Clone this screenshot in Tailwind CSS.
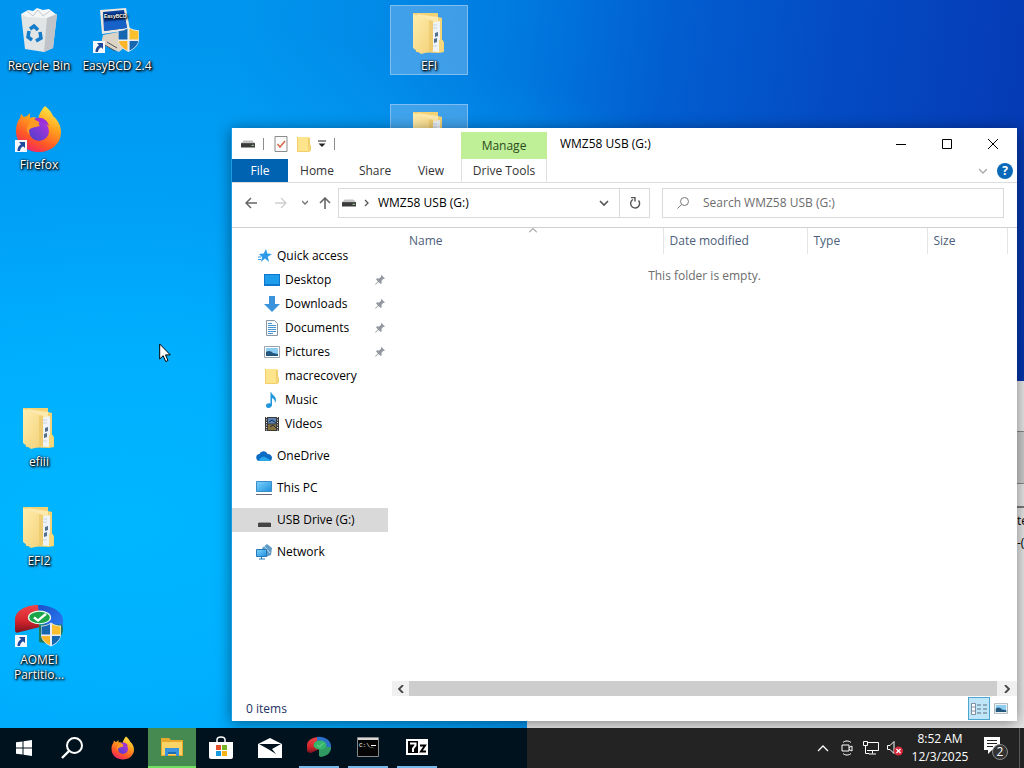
<!DOCTYPE html>
<html lang="en">
<head>
  <meta charset="UTF-8" />
  <meta name="viewport" content="width=device-width, initial-scale=1.0" />
  <title>WMZ58 USB (G:)</title>
  <script src="https://cdn.jsdelivr.net/npm/@tailwindcss/browser@4"></script>
</head>
<body class="h-screen overflow-hidden flex flex-col font-['Open_Sans','Noto_Sans',sans-serif] text-xs text-black">

  <!-- shared icons -->
  <svg class="absolute size-0" aria-hidden="true">
    <defs>
      <linearGradient id="gFolder" x1="0" y1="0" x2="1" y2="1"><stop offset="0" stop-color="#ffeeae"/><stop offset="1" stop-color="#f3d077"/></linearGradient>
      <linearGradient id="gFox" x1="0.8" y1="0" x2="0.3" y2="1"><stop offset="0" stop-color="#fff04a"/><stop offset="0.4" stop-color="#ffa01e"/><stop offset="0.75" stop-color="#ff5428"/><stop offset="1" stop-color="#f0246a"/></linearGradient>
      <linearGradient id="gGlobe" x1="1" y1="0" x2="0" y2="1"><stop offset="0" stop-color="#b833e0"/><stop offset="1" stop-color="#4a3fc8"/></linearGradient>
      <linearGradient id="gRed" x1="0" y1="0" x2="0" y2="1"><stop offset="0" stop-color="#f0464a"/><stop offset="0.6" stop-color="#d2242c"/><stop offset="1" stop-color="#7c1220"/></linearGradient>
      <linearGradient id="gBlue" x1="0" y1="0" x2="1" y2="1"><stop offset="0" stop-color="#1c50c8"/><stop offset="1" stop-color="#2a7cf4"/></linearGradient>
      <linearGradient id="gScreen" x1="0" y1="0" x2="1" y2="1"><stop offset="0" stop-color="#7fd4fb"/><stop offset="1" stop-color="#1e90e0"/></linearGradient>
    </defs>

    <symbol id="shortcut" viewBox="0 0 12 12">
      <rect width="12" height="12" fill="#f6f8fc"/>
      <path d="M4 2h6v6L8 6.200C6 7.500 5 9 5 11H2.500C2.300 8 3.700 5.500 6 4.200Z" fill="#1f4a9c"/>
    </symbol>

    <symbol id="shield" viewBox="0 0 22 24">
      <path d="M11 0C8 2.500 4 3 1 3v9c0 6 5 9.500 10 12 5-2.500 10-6 10-12V3c-3 0-7-.5-10-3Z" fill="#e8eef4"/>
      <path d="M10 1.500C7.500 3.200 5 3.800 1.500 4V12H10Z" fill="#1766b0"/>
      <path d="M12 1.500c2.500 1.700 5 2.300 8.500 2.500V12H12Z" fill="#fcc02e"/>
      <path d="M1.700 13.500H10v9.200c-4-2.200-7.800-5.200-8.300-9.200Z" fill="#fcb52a"/>
      <path d="M20.300 13.500H12v9.200c4-2.200 7.800-5.200 8.300-9.200Z" fill="#1766b0"/>
    </symbol>

    <symbol id="folderBig" viewBox="0 -2 48 48">
      <path d="M8 5h25v4l4 1v22l2 2v10l-5 1-23-1Z" fill="#f3d274"/>
      <path d="M12 6 33 9v35l-20-1Z" fill="#fbe9ae"/>
      <path d="m27 15 8-2v31l-8-1Z" fill="#eef3f8"/>
      <path d="M28 17h4M28 20h4M28 38h4" stroke="#c9d3dd"/>
      <path d="m30 25 3-1v4l-3 1Zm-1 6 3-1v4l-3 1Z" fill="#54708c"/>
      <path d="m8 6 20 7v30l-12 3-8-6Z" fill="url(#gFolder)"/>
      <path d="m24 12 4 1v30l-4 1Z" fill="#ecc868" opacity=".7"/>
      <path d="M34 32h4v11l-4 1Z" fill="#f7d97d"/>
    </symbol>

    <symbol id="firefox" viewBox="0 0 48 48">
      <path d="M30 1c4 3 7 7 8 10 5 4 8 10 8 16 0 12-10 20-22 20S1 39 1 26c0-5 1-9 4-13l1-4 3 3 3-1 3-3v5c2-1 6-1 8 1 1-5 4-10 7-13Z" fill="url(#gFox)"/>
      <circle cx="24" cy="26" r="10" fill="url(#gGlobe)"/>
      <path d="M14 19c4-5 8-6 11-4-1 3-2 4 0 6-4 1-8 1-11 4 0 2 0 3 1 5-4-3-4-7-1-11Z" fill="#ff9a24"/>
      <path d="M19 14c7-3 13 0 15 7-5-4-10-3-15-7Z" fill="#9a2ed8"/>
    </symbol>

    <symbol id="partition" viewBox="0 0 48 48" preserveAspectRatio="none">
      <path d="M23 1C10 1 0 8 0 17v12c0 2 1 3 2 3l22-6 2-10Z" fill="url(#gRed)"/>
      <path d="M23 1c14 0 25 8 25 17v10H30l-6-12Z" fill="url(#gBlue)"/>
      <path d="M24 23h23l1 5c0 9-7 15-15 17l-9-3Z" fill="#1d7a5a"/>
      <ellipse cx="24.500" cy="15" rx="11" ry="7" fill="#19a548" stroke="#e9fff0" stroke-width="1.300"/>
      <path d="m19 15 4 3.500 8-7.500" fill="none" stroke="#fff" stroke-width="2.500"/>
    </symbol>

    <symbol id="partitionSmall" viewBox="0 0 24 24">
      <path d="M12 2C5 2 0 6 0 10v5c0 2 2 3 4 3l8-4Z" fill="url(#gRed)"/>
      <path d="M10 2c8-1 14 4 14 9v4l-10-1-4-6Z" fill="#2a6fc8"/>
      <path d="M12 12h12c0 6-4 9-10 10l-2-1Z" fill="#2f9a62"/>
      <ellipse cx="13" cy="10" rx="6.500" ry="4.500" fill="#35b56c"/>
      <path d="m10 10 2.500 2 4-4" fill="none" stroke="#7fd496"/>
    </symbol>

    <symbol id="folder" viewBox="0 0 16 16">
      <path d="M1 1h11l2 1v13l-2 1H1Z" fill="#f2cf6b"/>
      <path d="M2 1h10v14H2Z" fill="#ffe48e"/>
      <path d="M12 9h3v6l-3 1Z" fill="#f4d375"/>
    </symbol>

    <symbol id="drive" viewBox="0 0 16 8">
      <path d="M3 0h10l3 3H0Z" fill="#c4c4c4"/>
      <path d="M0 3h16v5H0Z" fill="#3b3b3b"/>
      <path d="M12 5.500h3" stroke="#b8e0b8"/>
    </symbol>

    <symbol id="pin" viewBox="0 0 12 12">
      <path d="m7.500 1 3.500 3.500-1.200.5-.6-.2L7.500 7l.2 2.300-1 .7L4.600 8 1.600 10.800l-.6-.5L4 7.400 2 5.200l1-1 2.300.2L7.200 2.500 7 1.700Z" fill="#9298a0"/>
    </symbol>

    <symbol id="picture" viewBox="0 0 16 12">
      <path d="M.5.5h15v11H.5Z" fill="#fff" stroke="#9aa4ae"/>
      <path d="M2 2h12v8H2Z" fill="#8ecdf2"/>
      <path d="M2 6c3-2 5-1 7 1l5 1v2H2Z" fill="#24577e"/>
    </symbol>
  </svg>

  <main class="relative flex-1 min-h-0 overflow-hidden bg-[radial-gradient(ellipse_at_12%_72%,#00b6ff_0%,#00b0ff_22%,#00a6fbb0_42%,#009cf400_68%),linear-gradient(97deg,#0095ee_0%,#0095ee_22%,#0288e6_36%,#0078de_48%,#025fd0_60%,#044cc4_75%,#053cb6_92%,#0330a5_100%)]">

    <!-- desktop icons -->
    <div class="absolute inset-0 pt-[5px] grid grid-cols-[repeat(13,78px)] auto-rows-[99px] items-start text-white text-center leading-[15px] [text-shadow:1px_1px_2px_#000,1px_1px_3px_#000,0_0_2px_#000]">
      <div class="col-start-1 row-start-1 flex flex-col items-center gap-[5px]">
        <svg class="size-12" viewBox="0 0 48 48">
          <path d="m6 9 7-4 5 1 4-3 6 2 6-1 8 6-5 5H12Z" fill="#f4f6f7"/>
          <path d="m6 9 6 3 20 1 10-4-4 34-9 4-19-3Z" fill="#e2e5e6"/>
          <path d="M32 13 42 9l-4 34-9 4Z" fill="#c0c4c8"/>
          <path d="m12 6 6 5 5-6 5 6 7-5" fill="none" stroke="#c5cbd0"/>
          <path d="m15 24 4-3 4 4M25 27l1 6-5 3M17 35l-4-3 1-6" fill="none" stroke="#147cc8" stroke-width="3.500"/>
        </svg>
        <span>Recycle Bin</span>
      </div>
      <div class="col-start-2 row-start-1 flex flex-col items-center gap-[5px]">
        <svg class="size-12" viewBox="0 0 48 48">
          <path d="M7 5 33 3l4 22-28 4Z" fill="#ece8e0"/>
          <path d="m10 7 21-2 3 18-23 3Z" fill="#0b3f9c"/>
          <path d="m11 17 21-3 2 9-23 3Z" fill="#1662c8"/>
          <text x="11" y="13" font-size="5" fill="#fff" font-family="Liberation Sans, sans-serif" font-weight="bold">EasyBCD</text>
          <path d="m10 30 20-4 9 10-13 11-18-8Z" fill="#ddd4c8"/>
          <path d="m12 40 10 6M14 37l10 6" stroke="#555"/>
          <use href="#shield" x="24" y="22" width="23" height="25"/>
          <use href="#shortcut" x="0" y="36" width="12" height="12"/>
        </svg>
        <span>EasyBCD 2.4</span>
      </div>
      <div class="col-start-1 row-start-2 flex flex-col items-center gap-[5px]">
        <svg class="size-12" viewBox="0 0 48 48">
          <use href="#firefox" y="1" width="48" height="48"/>
          <use href="#shortcut" x="0" y="36" width="12" height="12"/>
        </svg>
        <span>Firefox</span>
      </div>
      <div class="col-start-1 row-start-5 flex flex-col items-center gap-[5px]">
        <svg class="size-12"><use href="#folderBig"/></svg>
        <span>efiii</span>
      </div>
      <div class="col-start-1 row-start-6 flex flex-col items-center gap-[5px]">
        <svg class="size-12"><use href="#folderBig"/></svg>
        <span>EFI2</span>
      </div>
      <div class="col-start-1 row-start-7 flex flex-col items-center gap-[5px]">
        <svg class="size-12" viewBox="0 0 48 48">
          <use href="#partition" y="5" width="48" height="43"/>
          <use href="#shield" x="25" y="23" width="22" height="25"/>
          <use href="#shortcut" x="0" y="36" width="12" height="12"/>
        </svg>
        <span>AOMEI<br>Partitio...</span>
      </div>
      <div class="col-start-6 row-start-1 h-[70px] flex flex-col items-center gap-1 border border-[#7fbdf2] bg-[#7db9ee]/50">
        <svg class="size-12"><use href="#folderBig"/></svg>
        <span>EFI</span>
      </div>
      <div class="col-start-6 row-start-2 h-[70px] flex flex-col items-center border border-[#7fbdf2] bg-[#7db9ee]/50">
        <svg class="size-12"><use href="#folderBig"/></svg>
      </div>
    </div>

    <!-- window in the back -->
    <section class="absolute left-[527px] right-0 top-[381px] bottom-0 flex flex-col items-stretch bg-[#e8e8e8] overflow-hidden">
      <div class="h-[51px] border-b border-[#8a8a8a]"></div>
      <div class="h-[52px] bg-[#cdcdcd] border-b border-[#8a8a8a]"></div>
      <div class="h-6 border-b-2 border-[#7a7a7a]"></div>
      <p class="pt-0.5 pl-[490px] leading-[22px] whitespace-nowrap">te<br>-(</p>
    </section>

    <!-- explorer -->
    <section class="absolute left-[231px] right-[7px] top-32 bottom-[7px] flex flex-col bg-white border-l border-[#1a9be8] shadow-[0_2px_14px_rgba(0,0,0,0.45)]">
      <header class="flex h-[31px] pr-px">
        <div class="w-[229px] flex items-center pl-[9px]">
          <svg class="w-[14px] h-2"><use href="#drive"/></svg>
          <span class="ml-2 w-px h-3 bg-[#8c8c8c]"></span>
          <button class="ml-2.5" aria-label="Properties">
            <svg class="w-[14px] h-4" viewBox="0 0 14 16"><path d="M1 .5h12v15H1Z" fill="#fbfbfb" stroke="#8c8c8c"/><path d="m3.500 8 2.500 3 5-6" fill="none" stroke="#d8694a" stroke-width="1.500"/></svg>
          </button>
          <button class="ml-2" aria-label="New folder"><svg class="size-4"><use href="#folder"/></svg></button>
          <button class="ml-1.5" aria-label="Customize Quick Access Toolbar">
            <svg class="w-2 h-2" viewBox="0 0 8 8"><path d="M0 1h8" stroke="#222"/><path d="M.5 3.500h7L4 7Z" fill="#222"/></svg>
          </button>
          <span class="ml-2 w-px h-3 bg-[#8c8c8c]"></span>
        </div>
        <div class="w-[86px] mt-1 flex items-center justify-center bg-[#bff098] text-[#2c4a1c]">Manage</div>
        <h1 class="flex-1 pl-[13px] leading-[31px]">WMZ58 USB (G:)</h1>
        <button class="w-[46px] grid place-items-center" aria-label="Minimize"><svg class="size-[10px]" viewBox="0 0 10 10"><path d="M0 5.500h10" stroke="#000"/></svg></button>
        <button class="w-[46px] grid place-items-center" aria-label="Maximize"><svg class="size-[10px]" viewBox="0 0 10 10"><path d="M.5.5h9v9h-9Z" fill="none" stroke="#000"/></svg></button>
        <button class="w-[46px] grid place-items-center" aria-label="Close"><svg class="size-[10px]" viewBox="0 0 10 10"><path d="m0 0 10 10M10 0 0 10" stroke="#000"/></svg></button>
      </header>

      <nav class="flex h-6 border-b border-[#dcdcdc] text-[#333]">
        <button class="w-14 bg-[#0063b1] text-white">File</button>
        <button class="w-[58px]">Home</button>
        <button class="w-[58px]">Share</button>
        <button class="w-[54px]">View</button>
        <button class="ml-[3px] w-[86px] border-x border-[#e0e0e0]">Drive Tools</button>
        <div class="flex-1"></div>
        <button class="mr-2.5" aria-label="Expand the Ribbon"><svg class="w-2 h-2" viewBox="0 0 8 8"><path d="m0 2 4 4 4-4" fill="none" stroke="#a8a8a8" stroke-width="1.300"/></svg></button>
        <button class="mr-1" aria-label="Help">
          <span class="grid place-items-center size-4 rounded-full bg-[#0a68b8] text-white font-bold">?</span>
        </button>
      </nav>

      <div class="flex items-center h-[45px] pb-1 pr-[13px] border-b border-[#d0d0d0]">
        <div class="w-[106px] flex items-center pl-[13px]">
          <button aria-label="Back"><svg class="w-3 h-3" viewBox="0 0 12 12"><path d="M6 1 1 6l5 5M1 6h11" fill="none" stroke="#666" stroke-width="1.500"/></svg></button>
          <button class="ml-[18px]" aria-label="Forward"><svg class="w-3 h-3" viewBox="0 0 12 12"><path d="m6 1 5 5-5 5M11 6H0" fill="none" stroke="#cfcfcf" stroke-width="1.300"/></svg></button>
          <button class="ml-[15px]" aria-label="Recent locations"><svg class="w-[6px] h-[6px]" viewBox="0 0 6 6"><path d="m0 1 3 3 3-3" fill="none" stroke="#777" stroke-width="1.400"/></svg></button>
          <button class="ml-[11px]" aria-label="Up"><svg class="w-3 h-3" viewBox="0 0 12 12"><path d="m1 6 5-5 5 5M6 1v11" fill="none" stroke="#666" stroke-width="1.600"/></svg></button>
        </div>
        <div class="w-[312px] h-[30px] flex items-center border border-[#d9d9d9]">
          <svg class="ml-[3px] w-[14px] h-2"><use href="#drive"/></svg>
          <svg class="ml-2 w-[5px] h-2" viewBox="0 0 5 8"><path d="m1 1 3 3-3 3" fill="none" stroke="#555" stroke-width="1.300"/></svg>
          <span class="ml-[9px] flex-1">WMZ58 USB (G:)</span>
          <button class="mr-2.5" aria-label="Previous locations"><svg class="w-[10px] h-2" viewBox="0 0 10 8"><path d="m1 2 4 4 4-4" fill="none" stroke="#555" stroke-width="1.600"/></svg></button>
          <button class="w-[30px] h-full border-l border-[#d9d9d9] grid place-items-center" aria-label="Refresh">
            <svg class="size-3" viewBox="0 0 12 12"><path d="M9.500 3.500A4.500 4.500 0 1 1 4 2.500" fill="none" stroke="#555" stroke-width="1.400"/><path d="M2 .5h4v4" fill="none" stroke="#555" stroke-width="1.400"/></svg>
          </button>
        </div>
        <label class="ml-3 flex-1 h-[30px] flex items-center border border-[#d9d9d9] pl-3.5">
          <svg class="size-3" viewBox="0 0 12 12"><circle cx="7.500" cy="4.500" r="4" fill="none" stroke="#777"/><path d="M4.500 7.500.5 11.500" stroke="#777"/></svg>
          <input type="search" aria-label="Search" placeholder="Search WMZ58 USB (G:)" class="ml-3.5 flex-1 min-w-0 outline-none placeholder:text-[#6d6d6d]" />
        </label>
      </div>

      <div class="flex flex-1 min-h-0">
        <aside class="w-[156px] shrink-0 pt-4 leading-6 whitespace-nowrap">
          <a href="#" class="flex items-center h-6 pl-[26px] text-black">
            <svg class="w-[14px] h-[14px] mr-[5px]" viewBox="0 0 14 14"><path d="m8 0 1.300 4.600L14 5 9.800 7.800 11 13 7 9.600 2.800 13l1.400-4.800L1 5l4.700-.5Z" fill="#2f9be8"/><path d="M0 8h3M0 10.500h3" stroke="#2f9be8"/></svg>
            Quick access</a>
          <a href="#" class="flex items-center h-6 pl-8 pr-0.5">
            <svg class="size-4 mr-[5px]" viewBox="0 0 16 16"><path d="M0 2h16v12H0Z" fill="#1078cc"/><path d="M1 3h14v9H1Z" fill="#1f9cec"/></svg>
            <span class="flex-1">Desktop</span><svg class="size-3"><use href="#pin"/></svg></a>
          <a href="#" class="flex items-center h-6 pl-8 pr-0.5">
            <svg class="size-4 mr-[5px]" viewBox="0 0 16 16"><path d="M5 0h6v8h5l-8 8-8-8h5Z" fill="#3b93dc"/></svg>
            <span class="flex-1">Downloads</span><svg class="size-3"><use href="#pin"/></svg></a>
          <a href="#" class="flex items-center h-6 pl-8 pr-0.5">
            <svg class="size-4 mr-[5px]" viewBox="0 0 16 16"><path d="M2.500.5h8l3 3v12h-11Z" fill="#f8fbfd" stroke="#8a97a3"/><path d="M4 5.500h8M4 7.500h8M4 9.500h8M4 11.500h8M4 13.500h5M4 3.500h4" stroke="#4a94cf"/></svg>
            <span class="flex-1">Documents</span><svg class="size-3"><use href="#pin"/></svg></a>
          <a href="#" class="flex items-center h-6 pl-8 pr-0.5">
            <svg class="w-4 h-3 mr-[5px]"><use href="#picture"/></svg>
            <span class="flex-1">Pictures</span><svg class="size-3"><use href="#pin"/></svg></a>
          <a href="#" class="flex items-center h-6 pl-8">
            <svg class="size-4 mr-[5px]"><use href="#folder"/></svg>
            macrecovery</a>
          <a href="#" class="flex items-center h-6 pl-8">
            <svg class="size-4 mr-[5px]" viewBox="0 0 16 16"><path d="M7 0c1 3 5 4 5 8 0 1-.5 2-1 3 0-3-1-4-3-5v7c0 1.500-1.500 3-3.500 3S2 15 2 13.500 4 11 6.500 11.500V0Z" fill="#1e96dc"/></svg>
            Music</a>
          <a href="#" class="flex items-center h-6 pl-8">
            <svg class="size-4 mr-[5px]" viewBox="0 0 16 16"><path d="M1 1h14v14H1Z" fill="#3a3a3a"/><path d="M4 2h8v5.500H4Z" fill="#5a83b8"/><path d="M4 8.500h8V14H4Z" fill="#88733c"/><path d="M2.500 1v14M13.500 1v14" stroke="#eee" stroke-dasharray="1 1.500"/><path d="m5 6 3-2 4 3M6 11l3-2 3 3" stroke="#1f2e4a" fill="none"/></svg>
            Videos</a>
          <a href="#" class="flex items-center h-6 mt-2 pl-6">
            <svg class="w-4 h-[10px] mr-[5px]" viewBox="0 0 16 10"><path d="M4 10a3.500 3.500 0 0 1-.5-7C5-.5 10-1 11.500 3 14.500 3 16 5 16 7s-1.500 3-3 3Z" fill="#0a6cc4"/><path d="M3 10c0-3 4-5 6-4l6 3.500-2 .5Z" fill="#28a8ea"/></svg>
            OneDrive</a>
          <a href="#" class="flex items-center h-6 mt-2 pl-6">
            <svg class="size-4 mr-[5px]" viewBox="0 0 16 16"><path d="M.5 1.500h15v10H.5Z" fill="url(#gScreen)" stroke="#3c8cc8"/><path d="M0 14.500h16" stroke="#667"/></svg>
            This PC</a>
          <a href="#" class="flex items-center h-6 mt-2 pl-[26px] bg-[#d9d9d9]">
            <svg class="w-[13px] h-[5px] mt-2 mr-[6px]" viewBox="0 0 13 5"><path d="M1 0h11l1 2H0Z" fill="#999"/><path d="M0 1h13v4H0Z" fill="#444"/></svg>
            USB Drive (G:)</a>
          <a href="#" class="flex items-center h-6 mt-2 pl-6">
            <svg class="size-4 mr-[5px]" viewBox="0 0 16 16"><path d="m6 4 5-4 5 4-1 7-5 2Z" fill="#5f9cc8"/><path d="m8 2 6 7" stroke="#b8dcf2"/><path d="M.5 5.500h10v7H.5Z" fill="url(#gScreen)" stroke="#2478b8"/><path d="M3 15h6M5.500 12v3" stroke="#2478b8"/></svg>
            Network</a>
        </aside>

        <div class="flex-1 min-w-0 flex flex-col pl-1">
          <div class="relative flex-1">
            <svg class="absolute left-[137px] top-0 w-2 h-[5px]" viewBox="0 0 8 5"><path d="m0 4.500 4-4 4 4" fill="none" stroke="#777"/></svg>
            <table class="w-full table-fixed text-left text-[#4c607a]">
              <thead>
                <tr class="h-[26px]">
                  <th class="font-normal pl-[17px] border-r border-[#e5e5e5]">Name</th>
                  <th class="w-36 font-normal pl-1.5 border-r border-[#e5e5e5]">Date modified</th>
                  <th class="w-30 font-normal pl-1.5 border-r border-[#e5e5e5]">Type</th>
                  <th class="w-20 font-normal pl-1.5 border-r border-[#e5e5e5]">Size</th>
                  <th class="w-[10px]"></th>
                </tr>
              </thead>
              <tbody>
                <tr><td colspan="5" class="pt-3.5 text-center text-[#6d6d6d]">This folder is empty.</td></tr>
              </tbody>
            </table>
          </div>
          <div class="flex items-center h-[15px] bg-[#f0f0f0]">
            <button class="w-[17px] grid place-items-center" aria-label="Scroll left"><svg class="w-[6px] h-2" viewBox="0 0 6 8"><path d="M5 0 1 4l4 4" fill="none" stroke="#444" stroke-width="1.800"/></svg></button>
            <div class="flex-1 h-full bg-[#cdcdcd]"></div>
            <button class="w-5 grid place-items-center" aria-label="Scroll right"><svg class="w-[6px] h-2" viewBox="0 0 6 8"><path d="m1 0 4 4-4 4" fill="none" stroke="#444" stroke-width="1.800"/></svg></button>
          </div>
        </div>
      </div>

      <footer class="flex items-center h-[25px] pl-3.5 text-[#1e3264]">
        <span class="flex-1">0 items</span>
        <button class="w-[22px] h-[23px] grid place-items-center bg-[#bfe6f8] border border-[#4aa6d0]" aria-label="Details view">
          <svg class="w-4 h-3" viewBox="0 0 16 12"><path d="M.5.500h4v11h-4ZM0 4h5M0 8h5" fill="#fff" stroke="#7c8ea0"/><path d="M6 2h4M12 2h4M6 6h4M12 6h4M6 10h4M12 10h4" stroke="#5c6c7c"/></svg>
        </button>
        <button class="w-[22px] mr-[5px] grid place-items-center" aria-label="Large thumbnails view"><svg class="w-[14px] h-[11px]"><use href="#picture"/></svg></button>
      </footer>
    </section>

    <!-- mouse pointer -->
    <svg class="absolute left-[159px] top-[343px] w-3 h-5" viewBox="0 0 12 20"><path d="M.7 1v15l3.500-3.300L6.700 18.500l2.300-1-2.500-5.600h4.800Z" fill="#fff" stroke="#000"/></svg>
  </main>

  <!-- taskbar -->
  <footer class="h-10 shrink-0 flex items-stretch bg-[linear-gradient(to_right,#00121d_527px,#232323_527px)] text-white">
    <button class="w-12 grid place-items-center" aria-label="Start">
      <svg class="size-4" viewBox="0 0 16 16"><path d="m0 2.300 6.500-.9v6.100H0ZM7.500 1.200 16 0v7.500H7.500ZM0 8.500h6.500v6.100L0 13.700ZM7.500 8.500H16V16l-8.500-1.200Z" fill="#fff"/></svg>
    </button>
    <button class="w-12 grid place-items-center" aria-label="Search">
      <svg class="size-[22px]" viewBox="0 0 22 22"><circle cx="13.500" cy="8.500" r="7.500" fill="none" stroke="#fff" stroke-width="2"/><path d="M8 14 1 21" stroke="#fff" stroke-width="2.400"/></svg>
    </button>
    <div class="ml-[3px] flex gap-px">
      <button class="w-12 grid place-items-center" aria-label="Firefox"><svg class="size-6"><use href="#firefox"/></svg></button>
      <button class="w-12 grid place-items-center bg-[#468a52] border-b-2 border-[#6fe060]" aria-label="File Explorer">
        <svg class="w-6 h-5" viewBox="0 0 24 20"><path d="M1 1h8l2 2h12v16H1Z" fill="#e8a92c"/><path d="M2 5h20v13H2Z" fill="#fbd467"/><path d="M5 11h14v8h-3v-4H8v4H5Z" fill="#3a93dc"/><path d="M8 15h8v2H8Z" fill="#1d6cb4"/></svg>
      </button>
      <button class="w-12 grid place-items-center" aria-label="Microsoft Store">
        <svg class="w-6 h-6" viewBox="0 0 24 24"><path d="M8 6V4c0-4 8-4 8 0v2" fill="none" stroke="#fff" stroke-width="1.500"/><path d="M0 6h24v15c0 1-1 2-2 2H2c-1 0-2-1-2-2Z" fill="#fff"/><path d="M7 9h5v5H7Z" fill="#e4502c"/><path d="M13 9h5v5h-5Z" fill="#78b428"/><path d="M7 15h5v5H7Z" fill="#1a9be0"/><path d="M13 15h5v5h-5Z" fill="#f8b414"/></svg>
      </button>
      <button class="w-12 grid place-items-center" aria-label="Mail">
        <svg class="w-6 h-5" viewBox="0 0 24 20"><path d="M0 6 12 0l12 6v14H0Z" fill="#fff"/><path d="M1 6h22l-9 5 4 5-8-5Z" fill="#00121d"/></svg>
      </button>
      <button class="w-12 grid place-items-center border-b-2 border-transparent bg-[linear-gradient(#76b9ed,#76b9ed)] bg-no-repeat bg-origin-border bg-[size:40px_2px] bg-bottom" aria-label="AOMEI Partition Assistant"><svg class="size-6"><use href="#partitionSmall"/></svg></button>
      <button class="w-12 grid place-items-center border-b-2 border-transparent bg-[linear-gradient(#76b9ed,#76b9ed)] bg-no-repeat bg-origin-border bg-[size:40px_2px] bg-bottom" aria-label="Command Prompt">
        <svg class="w-[22px] h-5" viewBox="0 0 22 20"><path d="M.5.500h21v19H.5Z" fill="#050505" stroke="#8a8a8a"/><path d="M1 1h20v2H1Z" fill="#d8d8d8"/><text x="2" y="10" font-size="6" fill="#fff" font-family="Liberation Mono, monospace">C:\_</text><path d="M14 8.500h5" stroke="#fff"/></svg>
      </button>
      <button class="w-12 grid place-items-center border-b-2 border-transparent bg-[linear-gradient(#76b9ed,#76b9ed)] bg-no-repeat bg-origin-border bg-[size:40px_2px] bg-bottom" aria-label="7-Zip">
        <svg class="w-[22px] h-4" viewBox="0 0 22 16"><path d="M0 0h22v16H0Z" fill="#fff"/><path d="M2 2h10v12H2Z" fill="#000"/><path d="M4 4.500h5.500v2L7 9.500V13" fill="none" stroke="#fff" stroke-width="2"/><path d="M14 6.500h5l-4 6h5" fill="none" stroke="#000" stroke-width="2"/></svg>
      </button>
    </div>

    <div class="flex-1"></div>

    <div class="flex items-center">
      <button class="w-6 grid place-items-center" aria-label="Show hidden icons"><svg class="w-3 h-2" viewBox="0 0 12 8"><path d="m1 7 5-5 5 5" fill="none" stroke="#fff" stroke-width="1.300"/></svg></button>
      <button class="w-6 grid place-items-center" aria-label="Meet Now"><svg class="w-3 h-4" viewBox="0 0 12 16" fill="none" stroke="#fff"><path d="M1 5h7v6H1ZM8 7.500l3-1.500v5L8 9.500M2 2.500C4 .5 8 .5 10 2.500M2 13.500c2 2 6 2 8 0"/></svg></button>
      <button class="w-6 grid place-items-center" aria-label="Network"><svg class="size-4" viewBox="0 0 16 16" fill="none" stroke="#fff"><path d="M4 2.500h11.500v8H4M9.500 10.500v3M6 14h7M.5 1.500h4v4h-4ZM2.500 5.500v8H6"/></svg></button>
      <button class="w-6 grid place-items-center" aria-label="Volume muted"><svg class="size-4" viewBox="0 0 16 16"><path d="M.5 5.500h2.500l4-4v12l-4-4H.5Z" fill="none" stroke="#fff"/><circle cx="11.500" cy="11" r="4.500" fill="#d8293c"/><path d="m9.500 9 4 4m0-4-4 4" stroke="#fff" stroke-width="1.300"/></svg></button>
      <button class="w-[66px] text-center leading-[18px]">8:52 AM<br>12/3/2025</button>
      <button class="w-[46px] grid place-items-center" aria-label="Notifications">
        <svg class="w-6 h-6" viewBox="0 0 24 24"><path d="M0 1h16v13H8l-4 4v-4H0Z" fill="#fff"/><path d="M3 4.500h10M3 7.500h10M3 10.500h6" stroke="#232323"/><circle cx="16" cy="16" r="7.500" fill="#333" stroke="#8c8c8c"/><text x="16" y="20" text-anchor="middle" font-size="12" fill="#fff" font-family="Open Sans, sans-serif">2</text></svg>
      </button>
      <div class="w-[5px] h-full border-l border-[#5a5a5a]"></div>
    </div>
  </footer>
</body>
</html>
